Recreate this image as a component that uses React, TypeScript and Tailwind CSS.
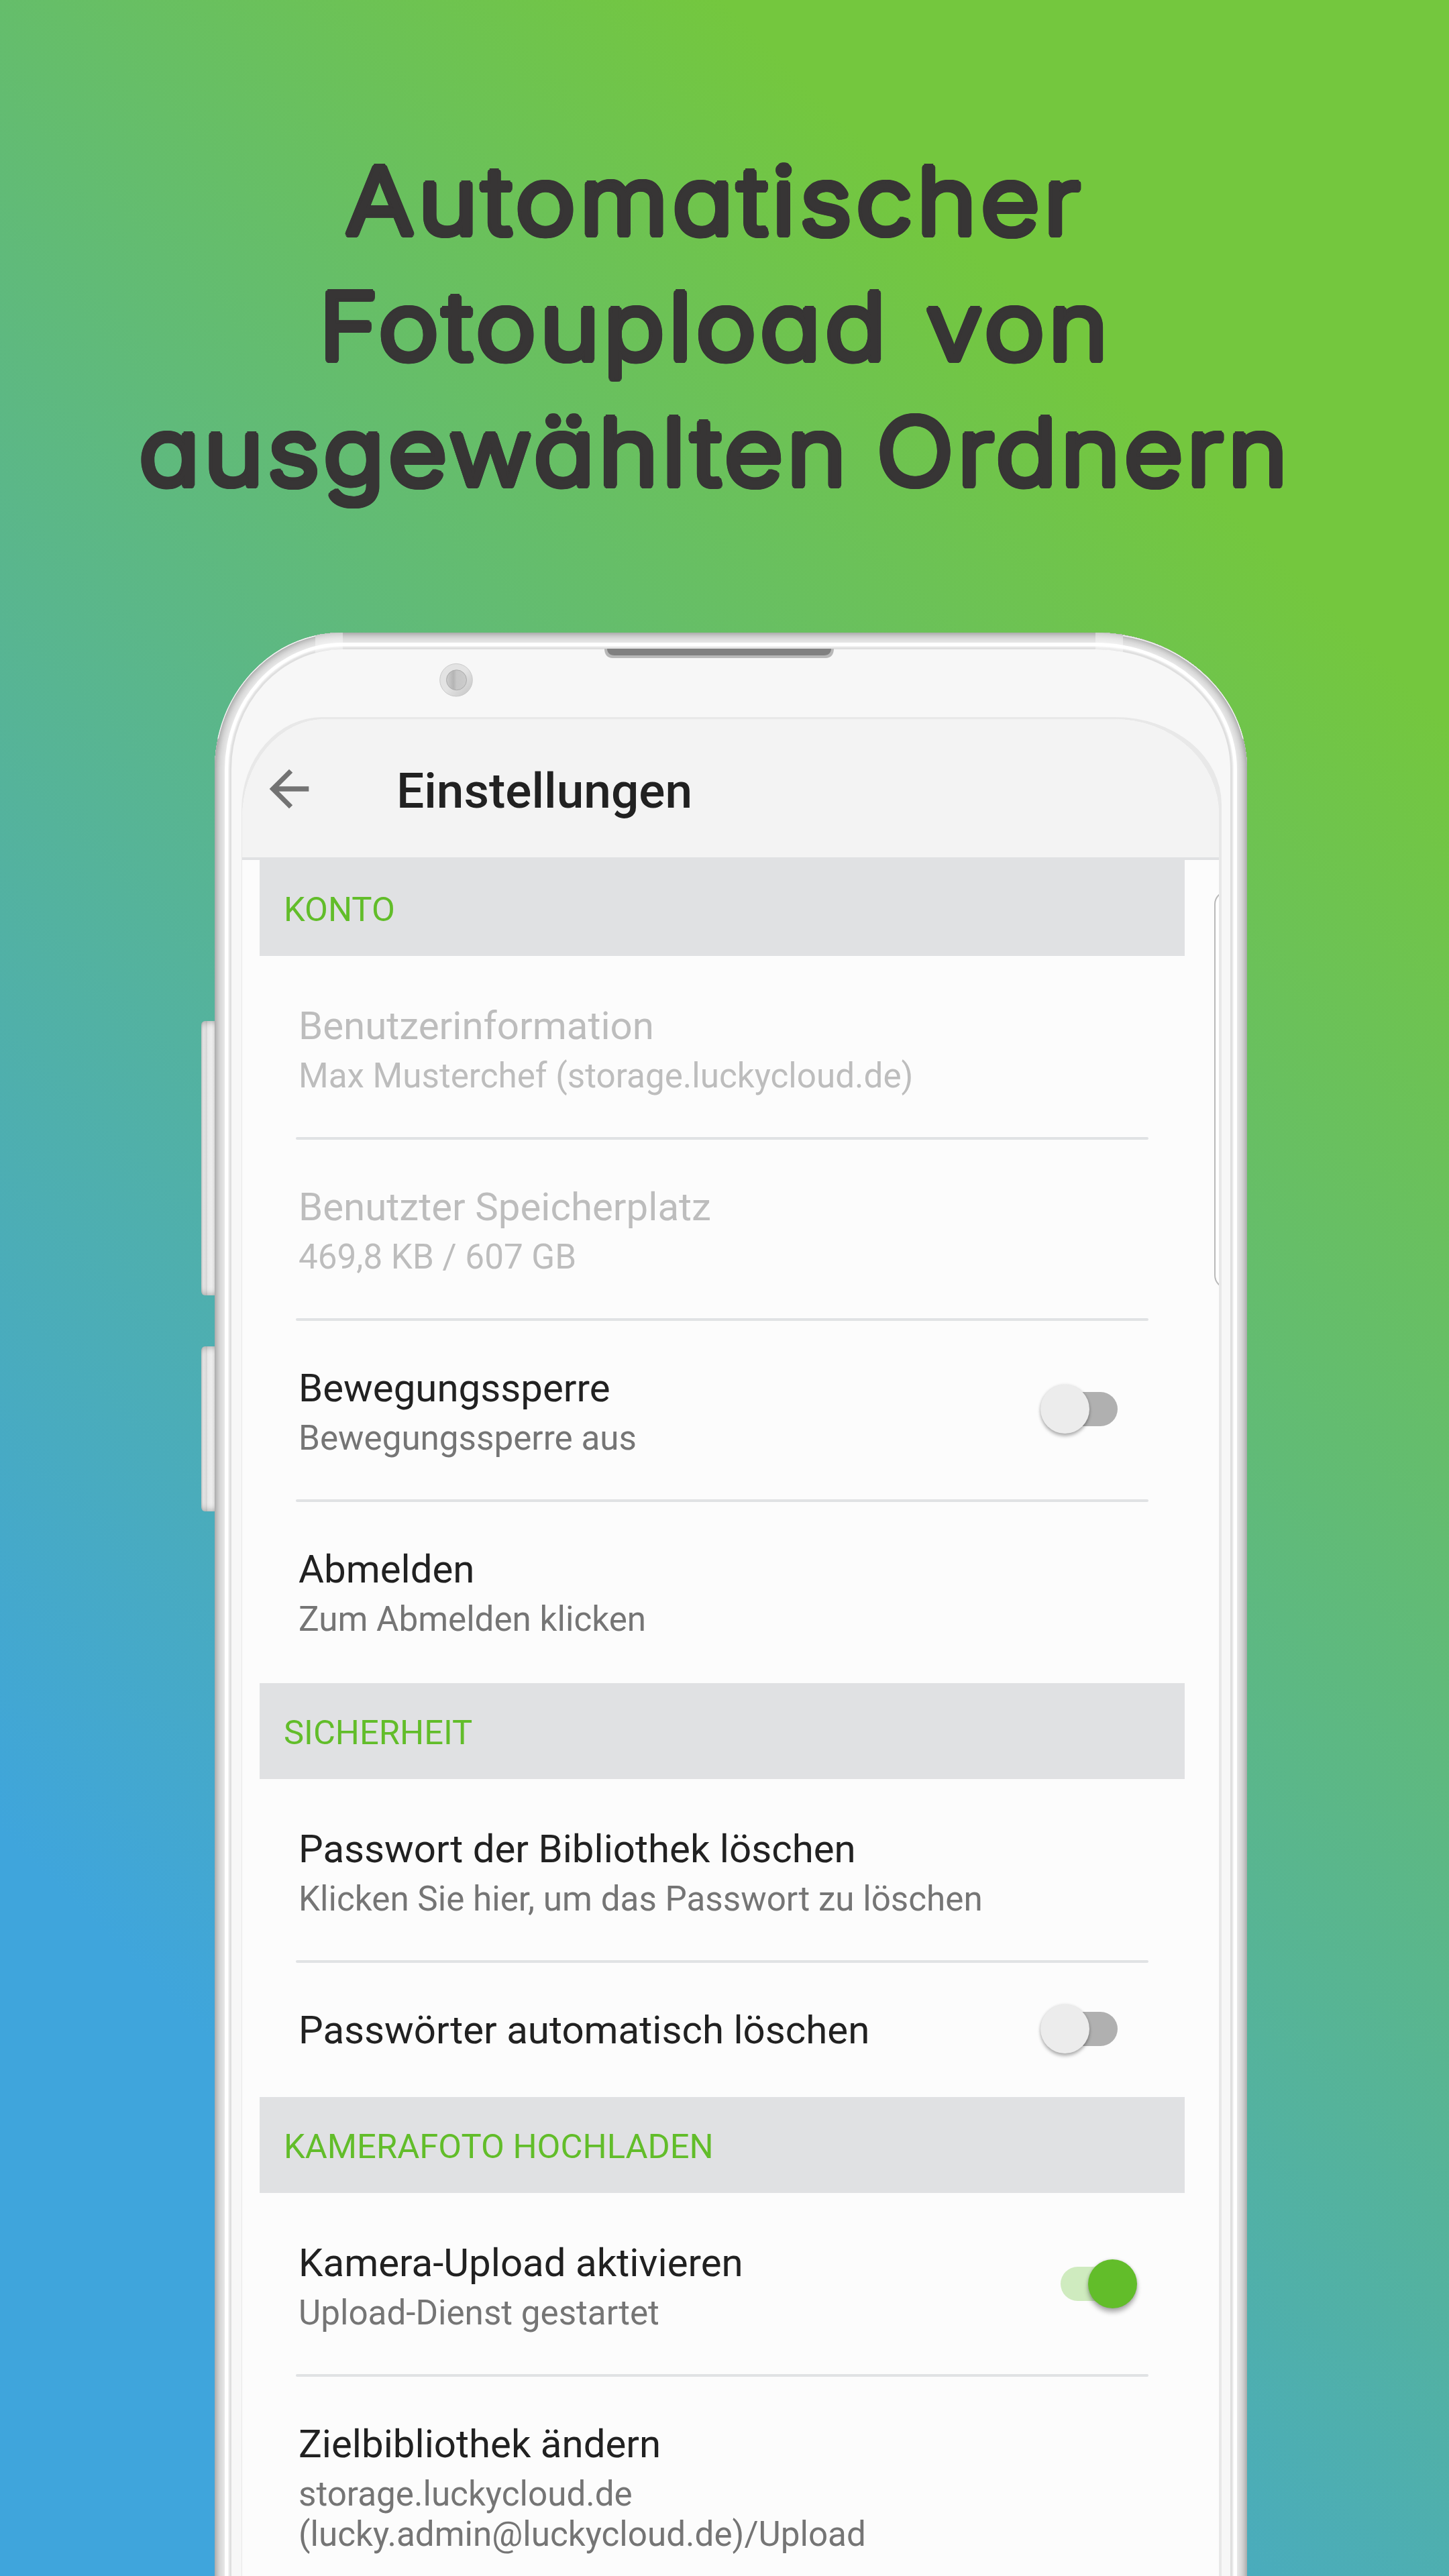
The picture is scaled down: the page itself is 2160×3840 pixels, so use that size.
import { type ReactNode } from "react";

function Header({ children }: { children: ReactNode }) {
  return (
    <h2 className="ml-[26px] mr-[51px] flex h-[143px] items-start bg-[#e0e1e3] pl-[36px] pt-[44px] text-[50.7px] leading-[60px] text-[#62bd2a]">
      {children}
    </h2>
  );
}

function Toggle({ on = false }: { on?: boolean }) {
  return on ? (
    <div className="relative mr-[122px] flex h-[73px] w-[114px] items-center">
      <div className="h-[51px] w-[90px] rounded-full bg-[#cfebbf]" />
      <div className="absolute right-0 top-0 size-[73px] rounded-full bg-[#62bd2a] shadow-[0_6px_7px_rgba(0,0,0,0.3),0_0_4px_rgba(0,0,0,0.15)]" />
    </div>
  ) : (
    <div className="relative mr-[151px] flex h-[73px] w-[115px] items-center justify-end">
      <div className="h-[51px] w-[96px] rounded-full bg-[#b0b0b0]" />
      <div className="absolute left-0 top-0 size-[73px] rounded-full bg-[#ececec] shadow-[0_4px_5px_rgba(0,0,0,0.27),0_0_4px_rgba(0,0,0,0.12)]" />
    </div>
  );
}

type RowProps = {
  title: string;
  lines?: string[];
  muted?: boolean;
  divided?: boolean;
  toggle?: "on" | "off";
  height?: string;
};

function Row({ title, lines = [], muted, divided, toggle, height = "h-[270px]" }: RowProps) {
  return (
    <div className={`flex flex-col ${height}`}>
      <div className={`ml-[80px] mr-[105px] h-1 rounded-sm ${divided ? "bg-[#e0e2e4]" : ""}`} />
      <div className="flex">
        <div className="grow pl-[84px] pt-[64px]">
          <div className={`text-[58.2px] leading-[72px] ${muted ? "text-[#bdbdbd]" : "text-[#212121]"}`}>{title}</div>
          <div className={`mt-[9px] text-[51.2px] leading-[60px] ${muted ? "text-[#bdbdbd]" : "text-[#757575]"}`}>
            {lines.map((l) => (
              <div key={l}>{l}</div>
            ))}
          </div>
        </div>
        {toggle && (
          <div className={lines.length ? "pt-[95px]" : "pt-[62px]"}>
            <Toggle on={toggle === "on"} />
          </div>
        )}
      </div>
    </div>
  );
}

export default function App() {
  return (
    <main className="flex h-[3840px] w-[2160px] flex-col overflow-hidden bg-[linear-gradient(45deg,#3fa5dc_18.5%,#74c73e_82%)] font-['Roboto',sans-serif]">
      <h1 className="flex h-[943px] shrink-0 flex-col items-center pr-[28px] pt-[205px] font-['Inter',sans-serif] text-[138px] font-light leading-[187px] text-[#373535] [font-feature-settings:'cv11'] [text-shadow:4.4px_0_#373535,4.05px_1.9px_#373535,3.1px_3.5px_#373535,1.7px_4.6px_#373535,0_5px_#373535,-1.7px_4.6px_#373535,-3.1px_3.5px_#373535,-4.05px_1.9px_#373535,-4.4px_0_#373535,-4.05px_-1.9px_#373535,-3.1px_-3.5px_#373535,-1.7px_-4.6px_#373535,0_-5px_#373535,1.7px_-4.6px_#373535,3.1px_-3.5px_#373535,4.05px_-1.9px_#373535]">
        <span className="scale-x-110 tracking-[5.3px]">Automatischer</span>
        <span className="scale-x-110 tracking-[5px] [word-spacing:5px]">Fotoupload von</span>
        <span className="scale-x-110 whitespace-nowrap tracking-[4.8px] [word-spacing:-8px]">ausgewählten Ordnern</span>
      </h1>

      <div className="ml-[300px] flex shrink-0">
        <div className="flex w-5 flex-col pt-[579px]">
          <div className="h-[409px] rounded-l-md bg-[linear-gradient(90deg,#c6c6c6,#e2e2e2_15%,#dcdcdc_35%,#cfcfcf_40%,#e6e6e6_45%,#eeeeee_75%,#dedede)] shadow-[inset_0_10px_10px_-8px_rgba(0,0,0,0.25),inset_0_-10px_10px_-8px_rgba(0,0,0,0.25)]" />
          <div className="mt-[76px] h-[246px] rounded-l-md bg-[linear-gradient(90deg,#c6c6c6,#e2e2e2_15%,#dcdcdc_35%,#cfcfcf_40%,#e6e6e6_45%,#eeeeee_75%,#dedede)] shadow-[inset_0_10px_10px_-8px_rgba(0,0,0,0.25),inset_0_-10px_10px_-8px_rgba(0,0,0,0.25)]" />
        </div>

        <div className="relative h-[3000px] w-[1539px] rounded-tl-[190px_204px] rounded-tr-[226px_204px] bg-[#f7f7f7] shadow-[inset_0_0_0_1px_#aeaeae,inset_0_0_0_2px_#b4b4b4,inset_0_0_0_3px_#bababa,inset_0_0_0_4px_#c0c0c0,inset_0_0_0_5px_#c6c6c6,inset_0_0_0_6px_#cbcbcb,inset_0_0_0_7px_#d0d0d0,inset_0_0_0_8px_#d4d4d4,inset_0_0_0_9px_#d8d8d8,inset_0_0_0_11px_#dcdcdc,inset_0_0_0_13px_#e1e1e1,inset_0_0_0_15px_#e6e6e6,inset_0_0_0_20px_#ffffff,inset_0_0_0_21px_#f4f4f4,inset_0_0_0_22px_#ebebeb,inset_0_0_0_23px_#e3e3e3,inset_0_0_0_25px_#dedede]">
          <svg className="absolute left-0 top-0" width="1539" height="220" viewBox="0 0 1539 220" fill="none">
            <path d="M150 4C164 1 178 0 191 0V25C176 25 162 27 150 30Z" fill="#fff" fillOpacity=".4" />
            <path d="M1313 0C1327 0 1341 1 1354 4V29C1341 26 1327 25 1313 25Z" fill="#fff" fillOpacity=".4" />
            <path d="M5 158A189.3 203.3 0 0 1 150 5" stroke="#f4f4f4" strokeWidth="1.4" />
            <path d="M1354 4.5A225.3 203.3 0 0 1 1533 158" stroke="#f4f4f4" strokeWidth="1.4" />
            <path d="M581 24H923C923 33 918 38 911 38H593C586 38 581 33 581 24Z" fill="#b8b8b8" />
            <path d="M585 24H919C919 30 915 34 908 34H596C589 34 585 30 585 24Z" fill="#808080" />
            <defs>
              <linearGradient id="ring" x1="0" y1="0" x2="1" y2="1">
                <stop offset=".5" stopColor="#e3e3e3" />
                <stop offset="1" stopColor="#c4c4c4" />
              </linearGradient>
              <linearGradient id="lens" x1="0" y1="0" x2="1" y2="0">
                <stop offset="0" stopColor="#cfcfcf" />
                <stop offset=".35" stopColor="#b4b4b4" />
                <stop offset=".5" stopColor="#c6c6c6" />
                <stop offset="1" stopColor="#cccccc" />
              </linearGradient>
            </defs>
            <circle cx="360" cy="70.7" r="24.3" fill="url(#ring)" stroke="#c9c9c9" />
            <circle cx="360.5" cy="70.7" r="15" fill="url(#lens)" stroke="#ababab" />
          </svg>

          <div className="ml-[40px] mr-[38px] mt-[126px] h-[2900px] rounded-tl-[120px_138px] rounded-tr-[158px_130px] bg-[#e8e8e8] pl-[1px] pr-[4px] pt-[3px]">
            <div className="relative h-full overflow-hidden rounded-tl-[124px_148px] rounded-tr-[156px_142px] bg-[#fcfcfc]">
              <header className="flex h-[206px] items-start bg-[#f3f3f3] pl-[26px]">
                <svg className="mt-[60px]" width="88" height="88" viewBox="0 0 24 24" fill="#737373">
                  <path d="M20 11H7.83l5.59-5.59L12 4l-8 8 8 8 1.41-1.41L7.83 13H20v-2z" />
                </svg>
                <h2 className="ml-[116px] mt-[62px] text-[73px] font-medium leading-[90px] text-[#212121]">Einstellungen</h2>
              </header>
              <div className="h-1 bg-[#e0e1e3]" />
              <div className="absolute left-[1449px] top-[256px] h-[593px] w-[40px] rounded-[20px] border-2 border-[#b9b9b9] bg-white" />

              <Header>KONTO</Header>
              <Row title="Benutzerinformation" lines={["Max Musterchef (storage.luckycloud.de)"]} muted />
              <Row title="Benutzter Speicherplatz" lines={["469,8 KB / 607 GB"]} muted divided />
              <Row title="Bewegungssperre" lines={["Bewegungssperre aus"]} divided toggle="off" />
              <Row title="Abmelden" lines={["Zum Abmelden klicken"]} divided height="h-[274px]" />
              <Header>SICHERHEIT</Header>
              <Row title="Passwort der Bibliothek löschen" lines={["Klicken Sie hier, um das Passwort zu löschen"]} />
              <Row title="Passwörter automatisch löschen" divided toggle="off" height="h-[204px]" />
              <Header>KAMERAFOTO HOCHLADEN</Header>
              <Row title="Kamera-Upload aktivieren" lines={["Upload-Dienst gestartet"]} toggle="on" />
              <Row title="Zielbibliothek ändern" lines={["storage.luckycloud.de", "(lucky.admin@luckycloud.de)/Upload"]} divided height="h-[340px]" />
            </div>
          </div>
        </div>
      </div>
    </main>
  );
}
